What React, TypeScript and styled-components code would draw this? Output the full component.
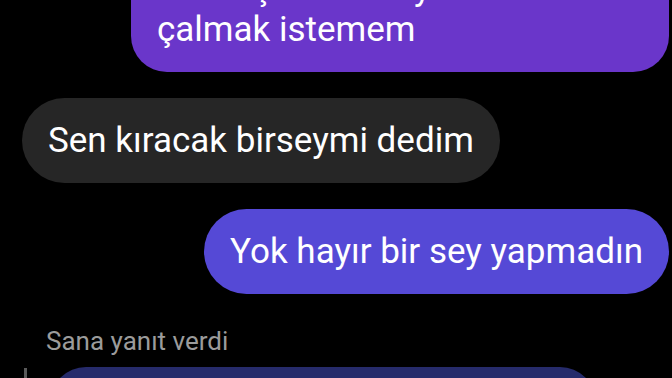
import React from "react";
import styled, { createGlobalStyle } from "styled-components";

const GlobalStyle = createGlobalStyle`
  html, body {
    margin: 0;
    padding: 0;
    background: #000;
  }
  body {
    width: 672px;
    height: 378px;
    overflow: hidden;
    font-family: Roboto, "Noto Sans", "Liberation Sans", sans-serif;
  }
`;

function App() {
  return (
    <>
      <GlobalStyle />
      <Screen>
        <Thread>
          <Bubble $side="out" $tone="#6a36ca" $wide>
            Ben hiç onunla oyun bile
            <br />
            çalmak istemem
          </Bubble>
          <Bubble $side="in" $tone="#262626">
            Sen kıracak birseymi dedim
          </Bubble>
          <Bubble $side="out" $tone="#5549d6">
            Yok hayır bir sey yapmadın
          </Bubble>
          <ReplyLabel>Sana yanıt verdi</ReplyLabel>
          <ReplyRow>
            <QuoteBar />
            <ReplyBubble />
          </ReplyRow>
        </Thread>
      </Screen>
    </>
  );
}
export default App;

const Screen = styled.div`
  width: 672px;
  height: 378px;
  overflow: hidden;
  background: #000;
`;

const Thread = styled.div`
  display: flex;
  flex-direction: column;
  align-items: flex-start;
  gap: 26px;
  /* scrolled: the first bubble starts above the top edge */
  margin-top: -54px;
  padding: 0 3px 0 22px;
`;

const Bubble = styled.div<{ $side: "in" | "out"; $tone: string; $wide?: boolean }>`
  align-self: ${(p) => (p.$side === "out" ? "flex-end" : "flex-start")};
  box-sizing: border-box;
  width: ${(p) => (p.$wide ? "538px" : "auto")};
  max-width: 538px;
  padding: 22px 26px;
  border-radius: ${(p) => (p.$wide ? "36px" : "43px")};
  background: ${(p) => p.$tone};
  color: #fff;
  font-size: 35px;
  line-height: 41px;
  white-space: nowrap;
`;

const ReplyLabel = styled.div`
  margin: 6px 0 -15px 24px;
  color: #9b9b9b;
  font-size: 26px;
  line-height: 30px;
`;

const ReplyRow = styled.div`
  display: flex;
  align-items: flex-start;
  gap: 23px;
`;

const QuoteBar = styled.div`
  width: 3px;
  height: 40px;
  margin: 1px 0 0 2px;
  background: #5a5a5a;
`;

const ReplyBubble = styled.div`
  width: 546px;
  height: 90px;
  border-radius: 36px;
  background: #262b6b;
`;
